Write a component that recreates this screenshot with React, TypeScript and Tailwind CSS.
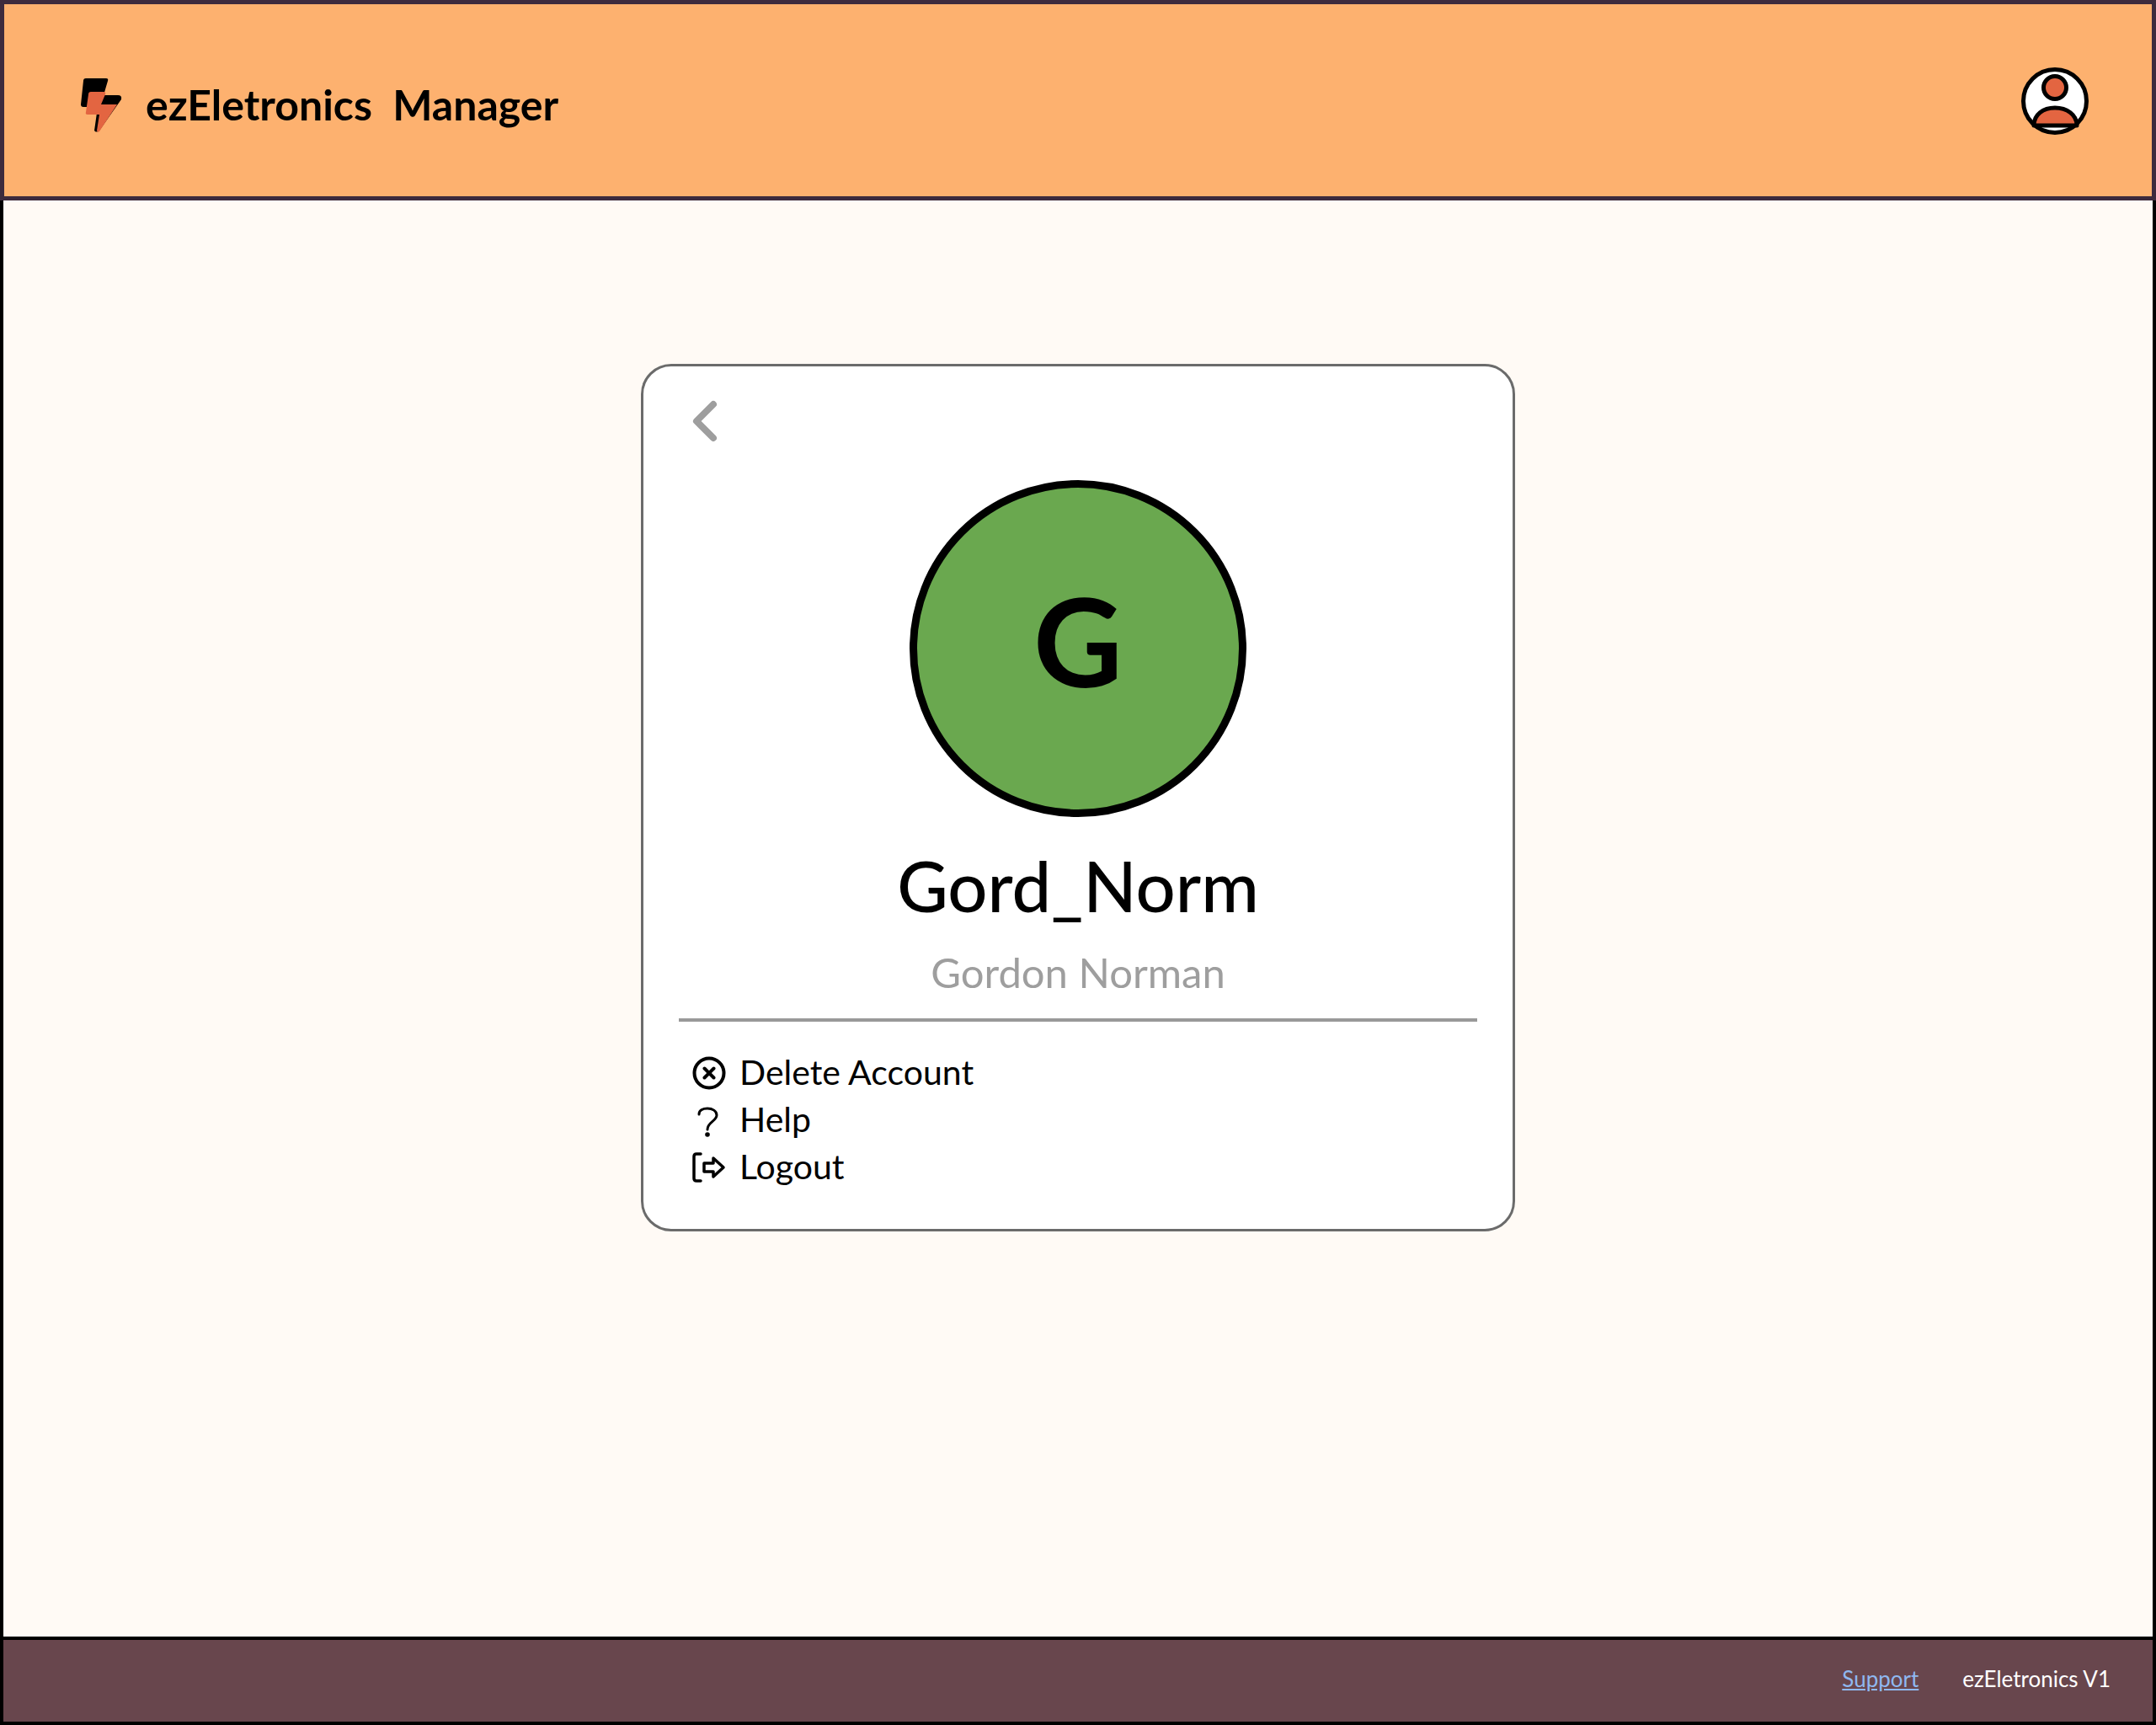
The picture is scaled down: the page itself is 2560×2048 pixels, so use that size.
import React from "react";

const font = "font-['Lato','Noto_Sans',sans-serif]";

function Logo() {
    return (
        <svg width="49" height="66" viewBox="0 0 49 66" className="shrink-0">
            <path d="M6 1H30Q33 1 32 4L27 21H44Q49 21 48 26L22 63Q18 66 16 63L20 35H3Q0 35 0 32L3 4Q3 1 6 1Z" fill="#000" />
            <path d="M12 17H27Q30 17 29 20L24 32H43L22 64Q20 66 19 63L22 44H8Q5 44 6 41L9 20Q9 17 12 17Z" fill="#e36541" />
        </svg>
    );
}

function UserIcon() {
    return (
        <svg width="80" height="80" viewBox="0 0 80 80" className="shrink-0">
            <circle cx="40" cy="40" r="37.5" fill="#fff" stroke="#000" strokeWidth="5" />
            <circle cx="40" cy="24" r="13.5" fill="#e36541" stroke="#000" strokeWidth="5" />
            <path d="M15 69C15 56 26 48 40 48C54 48 66 56 66 69Z" fill="#e36541" stroke="#000" strokeWidth="5" strokeLinejoin="round" />
        </svg>
    );
}

function MenuRow({ icon, label }: { icon: React.ReactNode; label: string }) {
    return (
        <div className="flex items-center h-[56px]">
            <div className="w-[40px] h-[40px] mt-[3px] flex items-center justify-center">{icon}</div>
            <span className="ml-[16px] text-[41px] text-black leading-none">{label}</span>
        </div>
    );
}

export default function App() {
    return (
        <div className={`flex flex-col w-[2560px] h-[2048px] bg-[#fffaf5] ${font}`}>
            <header className="flex items-center justify-between h-[238px] bg-[#fdb16f] border-[5px] border-[#3d2b3d] pl-[91px] pr-[75px]">
                <div className="flex items-center mt-[11px]">
                    <Logo />
                    <span className="ml-[28px] text-[50px] font-bold text-black whitespace-pre">ezEletronics  Manager</span>
                </div>
                <div className="mt-[2px]">
                    <UserIcon />
                </div>
            </header>

            <main className="flex-1 border-x-[4px] border-black pt-[194px]">
                <div className="w-[1038px] h-[1030px] ml-[757px] bg-white border-[3px] border-[#6b6b6b] rounded-[36px] flex flex-col px-[42px] pt-[38px]">
                    <div className="ml-[16px] h-[60px]">
                        <svg width="34" height="60" viewBox="0 0 34 60">
                            <path d="M25 7L5 27L25 47" fill="none" stroke="#9e9e9e" strokeWidth="8" strokeLinecap="round" strokeLinejoin="round" />
                        </svg>
                    </div>
                    <div className="mt-[37px] mx-auto w-[400px] h-[400px] rounded-full bg-[#6aa84f] border-[9px] border-black flex items-center justify-center text-[146px] font-bold text-black leading-none pb-[20px]">
                        G
                    </div>
                    <div className="mt-[33px] text-center text-[83px] text-black leading-[96px] font-medium">Gord_Norm</div>
                    <div className="mt-[25px] text-center text-[49px] text-[#9e9e9e] leading-[60px]">Gordon Norman</div>
                    <div className="mt-[25px] h-[4px] bg-[#999999]" />
                    <div className="mt-[31px] ml-[16px] flex flex-col">
                        <MenuRow
                            label="Delete Account"
                            icon={
                                <svg width="40" height="40" viewBox="0 0 40 40">
                                    <circle cx="20" cy="20" r="17.5" fill="none" stroke="#000" strokeWidth="4" />
                                    <path d="M14.5 14.5L25.5 25.5M25.5 14.5L14.5 25.5" stroke="#000" strokeWidth="4" strokeLinecap="round" />
                                </svg>
                            }
                        />
                        <MenuRow
                            label="Help"
                            icon={
                                <svg width="40" height="40" viewBox="0 0 40 40">
                                    <path d="M8 13C8 8 13 6 18 6C24 6 29 9 29 14C29 21 18 22 18 31" fill="none" stroke="#000" strokeWidth="3" strokeLinecap="round" />
                                    <circle cx="18" cy="37" r="2.8" fill="#000" />
                                </svg>
                            }
                        />
                        <MenuRow
                            label="Logout"
                            icon={
                                <svg width="40" height="40" viewBox="0 0 40 40">
                                    <path d="M10 4H5Q2 4 2 7V33Q2 36 5 36H10" fill="none" stroke="#000" strokeWidth="3.5" strokeLinecap="round" />
                                    <path d="M14 15H25V9L37 20L25 31V25H14Z" fill="none" stroke="#000" strokeWidth="3.5" strokeLinejoin="round" />
                                </svg>
                            }
                        />
                    </div>
                </div>
            </main>

            <footer className="flex items-center justify-end h-[105px] bg-[#68464d] border-[4px] border-black pr-[50px] pb-[4px] text-[26px]">
                <a className="text-[#8fb8f0] underline mr-[2px]">Support</a>
                <span className="ml-[50px] text-white">ezEletronics V1</span>
            </footer>
        </div>
    );
}
